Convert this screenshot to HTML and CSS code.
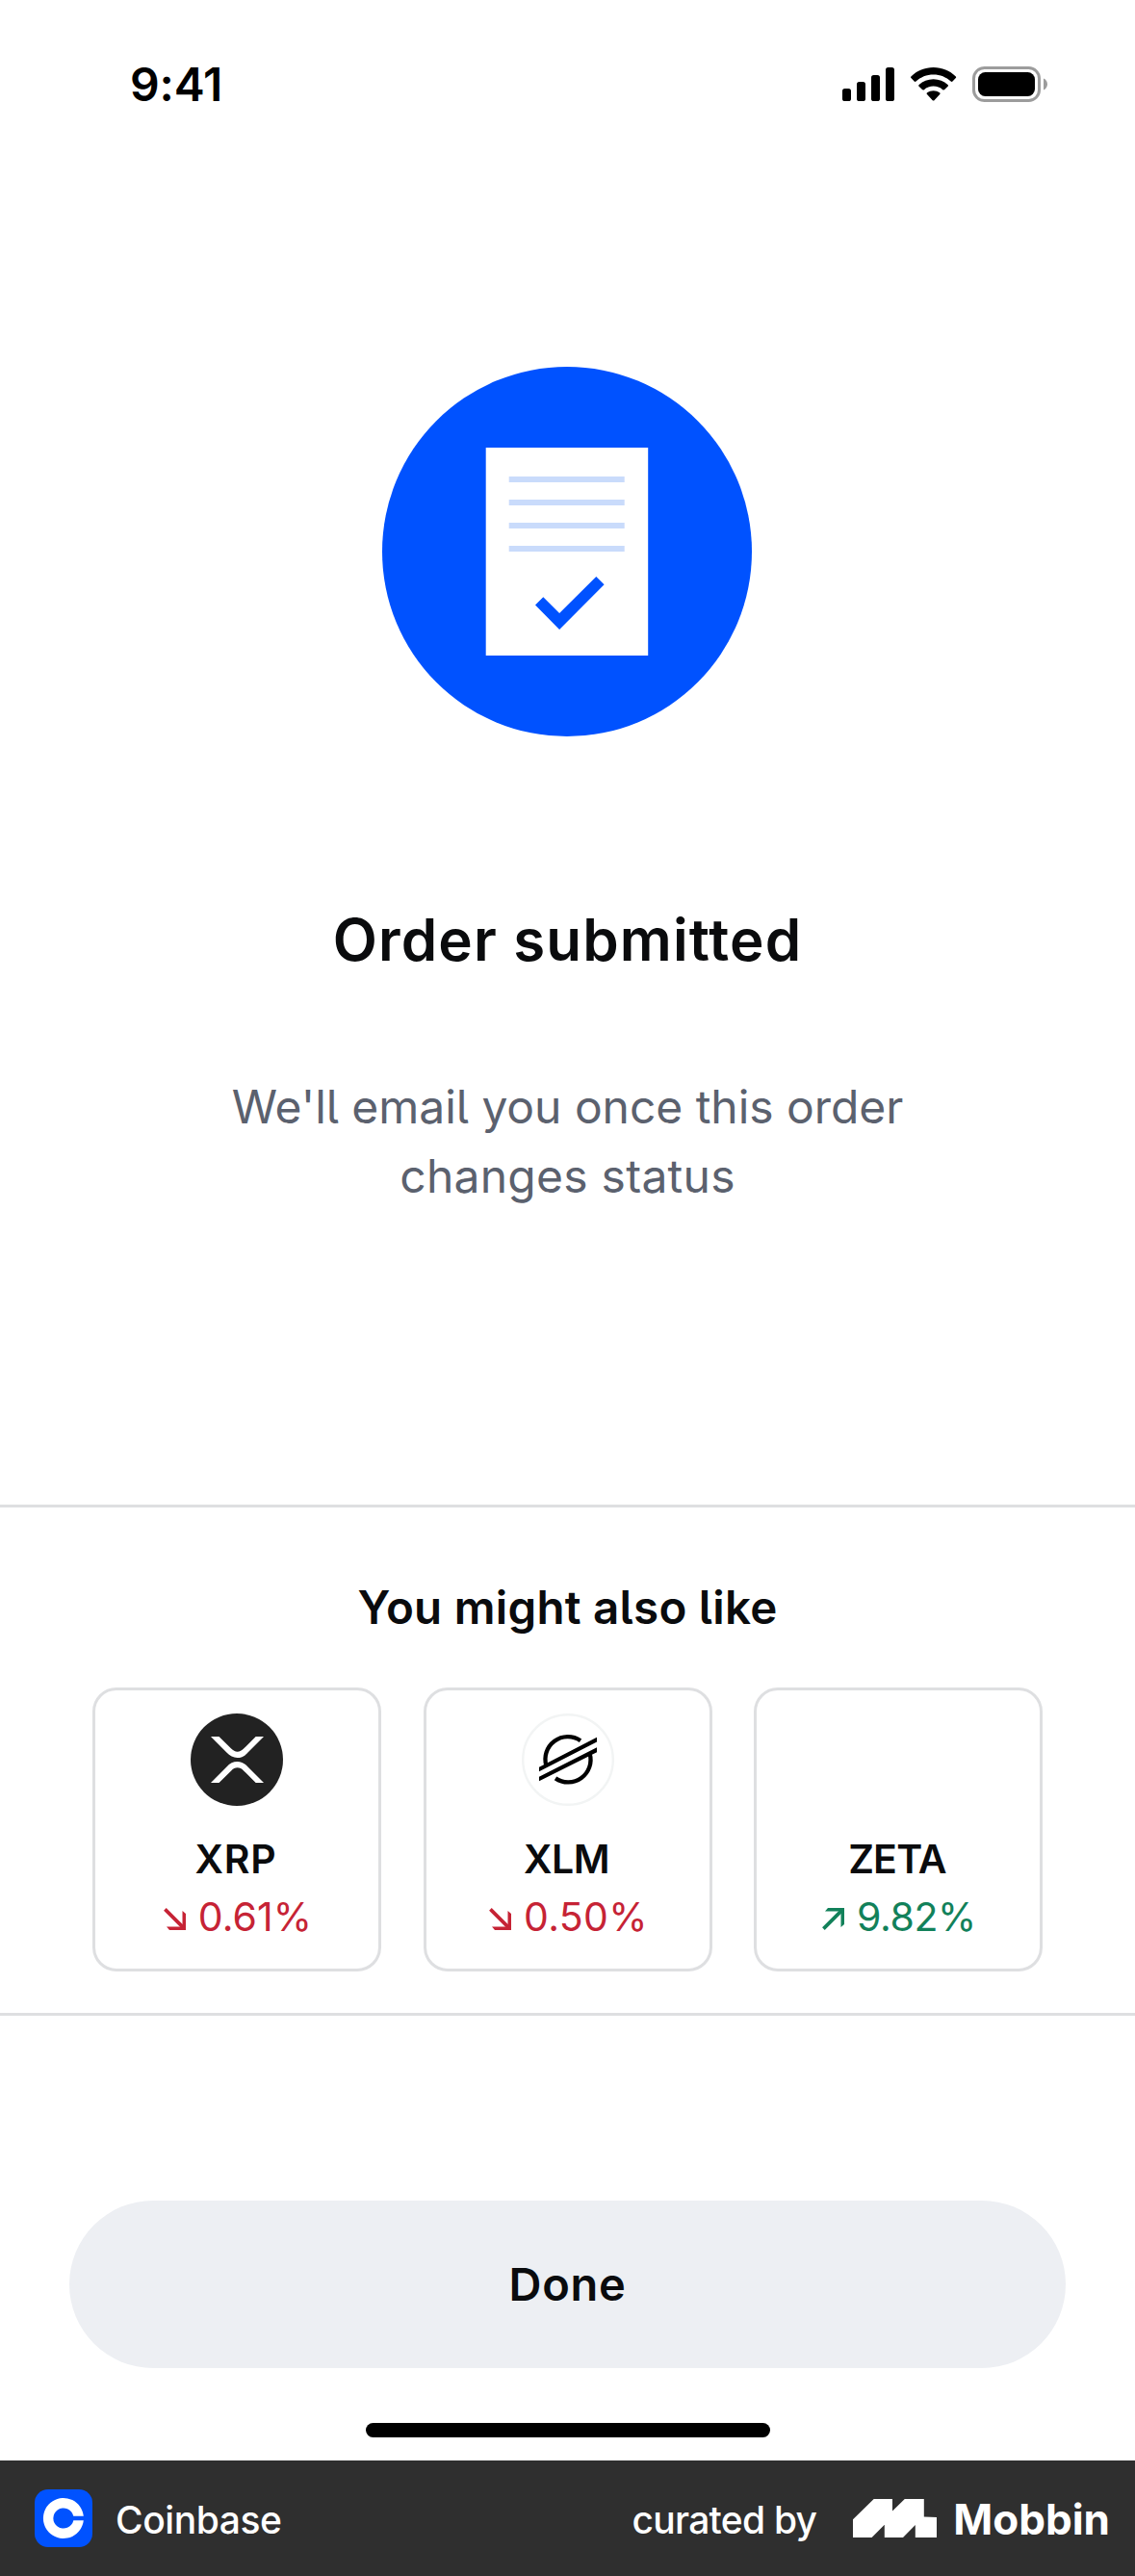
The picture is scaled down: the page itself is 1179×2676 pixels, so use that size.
FILE: index.html
```html
<!DOCTYPE html>
<html lang="en">
<head>
<meta charset="utf-8">
<title>Order submitted</title>
<link rel="stylesheet" href="styles.css">
</head>
<body>
<div class="screen">
  <header class="status-bar">
    <span class="time">9:41</span>
    <div class="status-icons">
      <svg width="54" height="35" viewBox="0 0 54 35">
        <rect x="0" y="22" width="9" height="13" rx="2.6"/>
        <rect x="15" y="15" width="9" height="20" rx="2.6"/>
        <rect x="30" y="8" width="9" height="27" rx="2.6"/>
        <rect x="45" y="0" width="9" height="35" rx="2.6"/>
      </svg>
      <svg class="wifi" width="48" height="35" viewBox="0 0 48 35">
        <path d="M23.6 0C14.6 0 6.6 3.5.6 9.2c-.7.6-.7 1.2-.2 1.8l3.3 3.5c.5.6 1.2.6 1.8 0C10.200 10 16.600 7.400 23.600 7.400s13.400 2.600 18.100 7.100c.6.6 1.300.6 1.800 0l3.300-3.500c.5-.6.5-1.200-.2-1.800C40.600 3.500 32.600 0 23.600 0z"/>
        <path d="M23.600 12.200c-5.800 0-10.900 2.100-14.900 5.700-.7.600-.7 1.200-.1 1.800l3.400 3.400c.6.6 1.200.6 1.900.1 2.600-2.300 6-3.600 9.700-3.600s7.100 1.300 9.700 3.600c.7.500 1.300.5 1.900-.1l3.400-3.400c.6-.6.6-1.200-.1-1.800-4-3.600-9.100-5.700-14.900-5.700z"/>
        <path d="M23.600 24.200c-2.500 0-4.700.8-6.500 2.100-.7.500-.7 1.100-.1 1.700l5.500 5.900c.7.800 1.500.8 2.200 0l5.500-5.900c.6-.6.6-1.200-.1-1.700-1.800-1.300-4-2.100-6.500-2.100z"/>
      </svg>
      <svg width="78" height="37" viewBox="0 0 78 37">
        <rect x="1.500" y="1.500" width="68" height="34" rx="11" fill="none" stroke="#9c9c9c" stroke-width="3"/>
        <rect x="6" y="6" width="59" height="25" rx="7.500"/>
        <path d="M74 12.500c2.600 1.200 4 3.400 4 6s-1.400 4.800-4 6z" fill="#9c9c9c"/>
      </svg>
    </div>
  </header>

  <main class="confirmation">
    <svg class="illustration" width="384" height="384" viewBox="0 0 384 384">
      <circle cx="192" cy="192" r="192" fill="#0052ff"/>
      <path d="M107.700 84h168.500v216H107.700z" fill="#fff"/>
      <path d="M131.700 114h120v6h-120zM131.700 138h120v6h-120zM131.700 162h120v6h-120zM131.700 186h120v6h-120z" fill="#c9dbfb"/>
      <path d="M159 247.600l8.300-8.300 16.800 16.800 38.200-38.200 8.300 8.300-46.500 46.700z" fill="#0052ff"/>
    </svg>
    <h1>Order submitted</h1>
    <p class="message">
      <span class="line">We'<span class="plain">l</span>l email you once this order</span>
      <span class="line loose">changes status</span>
    </p>
  </main>

  <section class="suggestions">
    <h2>You might also like</h2>
    <div class="cards">
      <article class="card">
        <svg class="coin" width="96" height="96" viewBox="0 0 96 96">
          <circle cx="48" cy="48" r="48" fill="#222"/>
          <path d="M21 24h8.500l12.700 12.600c3.700 4.100 9.200 4.100 12.900 0L67.700 24H76L59.500 40.600c-6.300 7.200-15.800 7.200-22.100 0zM21 72h8.500l12.700-12.600c3.700-4.100 9.200-4.100 12.900 0L67.700 72H76L59.500 55.400c-6.300-7.200-15.800-7.200-22.100 0z" fill="#fff"/>
        </svg>
        <h3 class="xrp">XRP</h3>
        <div class="change down">
          <svg width="23" height="23" viewBox="0 0 23 23">
            <path d="M1.400 1.400l19 19" stroke="currentColor" stroke-width="3.700"/>
            <path d="M3 19.500h16.500V3L23 6v17H6z" fill="currentColor"/>
          </svg>
          <span class="c1">0.61%</span>
        </div>
      </article>
      <article class="card">
        <svg class="coin" width="96" height="96" viewBox="0 0 96 96">
          <circle cx="48" cy="48" r="46.800" fill="#fff" stroke="#f2f4f4" stroke-width="2.400"/>
          <g fill="none" stroke="#000" stroke-width="4.300">
            <path d="M25.500 54.500A23.400 23.400 0 0 1 61 28.200M70.600 41.500A23.400 23.400 0 0 1 35 67.400"/>
          </g>
          <path d="M18 55.700L78 24.700v4.900L18 60.300zM18 65.700L78 35.300v5L18 70.300z"/>
        </svg>
        <h3 class="xlm">XLM</h3>
        <div class="change down">
          <svg width="23" height="23" viewBox="0 0 23 23">
            <path d="M1.400 1.400l19 19" stroke="currentColor" stroke-width="3.700"/>
            <path d="M3 19.500h16.500V3L23 6v17H6z" fill="currentColor"/>
          </svg>
          <span class="c2">0.50%</span>
        </div>
      </article>
      <article class="card">
        <div class="coin"></div>
        <h3 class="zeta">ZETA</h3>
        <div class="change up">
          <svg width="23" height="23" viewBox="0 0 23 23">
            <path d="M1.400 21.600l19-19" stroke="currentColor" stroke-width="3.700"/>
            <path d="M3 3.500h16.500V20l3.500-3V0H6z" fill="currentColor"/>
          </svg>
          <span class="c3">9.82%</span>
        </div>
      </article>
    </div>
  </section>

  <div class="actions">
    <button class="done" type="button">Done</button>
    <div class="home-indicator"></div>
  </div>

  <footer class="credit">
    <svg class="app-logo" width="60" height="60" viewBox="0 0 60 60">
      <rect width="60" height="60" rx="14" fill="#0052ff"/>
      <path d="M50.800 27.800A21 21 0 1 0 50.800 32.200H40.300A10.600 10.600 0 1 1 40.300 27.800z" fill="#fff"/>
    </svg>
    <span class="app-name">Coinbase</span>
    <span class="curated">curated by</span>
    <svg class="brand-mark" width="87" height="40" viewBox="0 0 87 40">
      <path d="M0 21.300L21.700 0H41v12.500L53.800 0h20v18.500L87 19v21H64.800V27L52 40H32.800V26.700L19.600 40H0z" fill="#fff"/>
    </svg>
    <span class="brand">Mobbin</span>
  </footer>
</div>
</body>
</html>
```
FILE: styles.css
```css
* {
  box-sizing: border-box;
}

body {
  margin: 0;
  background: #fff;
  color: #0a0b0d;
  font-family: Inter, "Liberation Sans", sans-serif;
}

h1, h2, h3, p {
  margin: 0;
  font-weight: 600;
}

svg {
  display: block;
  flex: none;
}

.screen {
  display: flex;
  flex-direction: column;
  width: 1179px;
  height: 2676px;
}

/* Status bar */
.status-bar {
  display: flex;
  justify-content: space-between;
  height: 381px;
  padding: 58px 91px 0 135px;
}

.time {
  color: #000;
  font-size: 48px;
  font-weight: 600;
  line-height: 60px;
  letter-spacing: -0.15px;
}

.status-icons {
  display: flex;
  align-items: center;
  height: 59px;
  gap: 17px;
}

.wifi {
  margin-right: -1px;
}

/* Confirmation */
.confirmation {
  display: flex;
  flex-direction: column;
  align-items: center;
  height: 1182px;
  text-align: center;
}

.illustration {
  margin-right: 1.6px;
}

h1 {
  margin-top: 175px;
  font-size: 60px;
  line-height: 72px;
  letter-spacing: 1.16px;
}

.message {
  margin-top: 102px;
  color: #5b616e;
  font-size: 48px;
  font-weight: 400;
  line-height: 72px;
  letter-spacing: -0.05px;
  font-feature-settings: "cv05";
}

.line {
  display: block;
}

.loose {
  letter-spacing: 0.25px;
}

.plain {
  font-feature-settings: normal;
}

/* Suggestions */
.suggestions {
  height: 531px;
  padding-top: 74px;
  border-top: 3px solid #dedfe1;
  border-bottom: 3px solid #dedfe1;
}

h2 {
  font-size: 47.5px;
  line-height: 60px;
  letter-spacing: 0.27px;
  text-align: center;
  font-feature-settings: "cv05";
}

.cards {
  display: flex;
  justify-content: space-between;
  margin-top: 53px;
  padding: 0 96px;
}

.card {
  display: flex;
  flex-direction: column;
  align-items: center;
  width: 300px;
  height: 295px;
  padding-top: 24px;
  border: 3px solid #dedfe1;
  border-radius: 25px;
}

.coin {
  width: 96px;
  height: 96px;
}

h3 {
  margin: 31px 2px 0 0;
  font-size: 41px;
  line-height: 48px;
}

.xrp {
  letter-spacing: 0.8px;
}

.xlm {
  letter-spacing: -0.5px;
}

.zeta {
  letter-spacing: -0.8px;
}

.change {
  display: flex;
  align-items: center;
  gap: 13px;
  margin: 6px 0 0 2px;
  font-size: 41px;
  line-height: 60px;
}

.change svg {
  margin-top: 5px;
}

.down {
  color: #c62335;
}

.up {
  color: #12815a;
}

.c1 {
  letter-spacing: 0.1px;
}

.c2 {
  letter-spacing: 0.35px;
}

.c3 {
  letter-spacing: -0.4px;
}

/* Actions */
.actions {
  display: flex;
  flex-direction: column;
  align-items: center;
  height: 462px;
  padding: 192px 72px 0;
}

.done {
  width: 100%;
  height: 174px;
  padding: 0;
  border: 0;
  border-radius: 87px;
  background: #edeff3;
  color: #0a0b0d;
  font: 600 47px/60px Inter, "Liberation Sans", sans-serif;
  letter-spacing: 0.7px;
}

.home-indicator {
  width: 420px;
  height: 15px;
  margin-top: 57px;
  border-radius: 8px;
  background: #000;
}

/* Credit bar */
.credit {
  display: flex;
  align-items: center;
  height: 120px;
  padding: 0 26px 0 36px;
  background: #2f2f2f;
  color: #fff;
  font-size: 39px;
  font-weight: 500;
  line-height: 60px;
}

.app-name {
  margin: 3px auto 0 24px;
  letter-spacing: -0.44px;
}

.curated {
  margin-top: 3px;
  letter-spacing: -0.74px;
}

.brand-mark {
  margin-left: 38px;
}

.brand {
  margin: 1px 0 0 17px;
  font-size: 44px;
  font-weight: 700;
}
```
